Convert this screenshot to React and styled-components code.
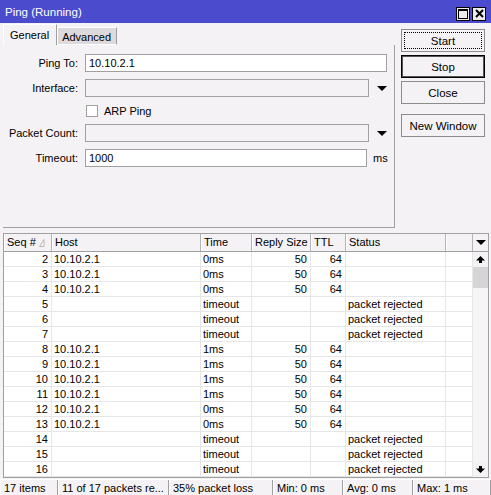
import React from 'react'
import styled, { createGlobalStyle } from 'styled-components'

const GlobalStyle = createGlobalStyle`
  html, body {
    margin: 0;
    padding: 0;
    background: #f4f2f4;
  }
  body {
    font-family: "Liberation Sans", Arial, sans-serif;
    font-size: 11px;
    color: #000;
  }
  * {
    box-sizing: border-box;
  }
`

const Window = styled.div`
  width: 491px;
  height: 495px;
  background: #f4f2f4;
  display: flex;
  flex-direction: column;
  overflow: hidden;
`

const TitleBar = styled.div`
  height: 23px;
  flex: none;
  background: #4b4bcd;
  color: #fff;
  display: flex;
  align-items: center;
  padding: 0 5px 0 5px;
  font-size: 11.5px;
`

const TitleText = styled.div`
  flex: 1;
  padding-top: 1px;
`

const TitleButton = styled.div`
  width: 14px;
  height: 14px;
  margin-left: 2px;
  margin-top: 4px;
  border: 1px solid #000;
  background: #ececec;
  display: flex;
  align-items: center;
  justify-content: center;
`

const Top = styled.div`
  flex: none;
  height: 205px;
  display: flex;
  padding: 1px 0 0 3px;
`

const TabArea = styled.div`
  width: 392px;
  display: flex;
  flex-direction: column;
`

const Tabs = styled.div`
  height: 21px;
  display: flex;
  align-items: flex-end;
`

const Tab = styled.div`
  height: ${p => (p.$active ? '21px' : '18px')};
  padding: ${p => (p.$active ? '3px 7px 0 6px' : '2px 5px 0 4px')};
  background: ${p => (p.$active ? '#f4f2f4' : '#dcdadc')};
  border-top: 1px solid #fff;
  border-left: 1px solid #fff;
  border-right: 1px solid #a0a0a0;
  border-bottom: ${p => (p.$active ? 'none' : '1px solid #fff')};
  line-height: 14px;
`

const Panel = styled.div`
  flex: 1;
  border-right: 1px solid #a0a0a0;
  border-bottom: 1px solid #a0a0a0;
  padding-top: 9px;
  display: grid;
  grid-template-columns: 75px 1fr;
  grid-auto-rows: min-content;
  column-gap: 7px;
  row-gap: 7px;
  align-items: center;
`

const Label = styled.div`
  text-align: right;
`

const Field = styled.div`
  display: flex;
  align-items: center;
  height: ${p => p.$h || 18}px;
`

const Input = styled.div`
  width: ${p => p.$w}px;
  height: 18px;
  background: ${p => (p.$empty ? '#f4f2f4' : '#fff')};
  border: 1px solid #a0a0a0;
  padding: 1px 3px 0;
  line-height: 15px;
`

const Arrow = styled.div`
  margin-left: 8px;
  width: 0;
  height: 0;
  border-left: 5px solid transparent;
  border-right: 5px solid transparent;
  border-top: 5px solid #000;
`

const Unit = styled.span`
  margin-left: 6px;
`

const Check = styled.div`
  width: 12px;
  height: 12px;
  background: #fff;
  border: 1px solid #a0a0a0;
  margin: 0 6px 0 1px;
`

const ButtonCol = styled.div`
  margin-left: 6px;
  padding-top: 5px;
  display: flex;
  flex-direction: column;
  gap: 3px;
`

const Button = styled.div`
  width: 84px;
  height: 23px;
  margin-top: ${p => p.$gap || 0}px;
  background: #f4f2f4;
  border: 1px solid ${p => (p.$default ? '#000' : '#8c8c8c')};
  box-shadow: ${p => (p.$default ? 'inset 0 0 0 1px #555' : 'none')};
  display: flex;
  align-items: center;
  justify-content: center;
  padding: 2px;
  font-size: 11.5px;
`

const Focus = styled.div`
  width: 100%;
  height: 100%;
  border: 1px dotted #000;
  display: flex;
  align-items: center;
  justify-content: center;
`

const TableBox = styled.div`
  flex: none;
  margin: 5px 2px 0 3px;
  height: 245px;
  border: 1px solid #a0a0a0;
  display: flex;
  background: #fff;
`

const Columns = styled.div`
  width: 469px;
  display: flex;
  flex-direction: column;
`

const COLS = '48px 149px 51px 59px 35px 100px 27px'

const HeadRow = styled.div`
  display: grid;
  grid-template-columns: ${COLS};
  height: 18px;
  background: #f4f2f4;
  border-bottom: 1px solid #a0a0a0;
`

const HeadCell = styled.div`
  border-right: 1px solid #b4b4b4;
  border-left: 1px solid #fff;
  padding: 2px 0 0 2px;
  display: flex;
  align-items: flex-start;
  gap: 3px;
`

const Row = styled.div`
  display: grid;
  grid-template-columns: ${COLS};
  height: 15px;
`

const Cell = styled.div`
  border-right: 1px solid #e6e6e6;
  border-bottom: 1px solid #e6e6e6;
  text-align: ${p => (p.$right ? 'right' : 'left')};
  padding: ${p => (p.$right ? '0 3px 0 0' : '0 0 0 2px')};
  line-height: 14px;
  white-space: nowrap;
  overflow: hidden;
`

const Scroll = styled.div`
  width: 15px;
  display: flex;
  flex-direction: column;
  background: #f4f2f4;
`

const ScrollHead = styled.div`
  height: 18px;
  border-bottom: 1px solid #a0a0a0;
  display: flex;
  align-items: center;
  justify-content: center;
`

const ScrollBtn = styled.div`
  height: 15px;
  display: flex;
  align-items: center;
  justify-content: center;
  background: #f4f2f4;
`

const Thumb = styled.div`
  height: 21px;
  background: #d6d4d6;
`

const Track = styled.div`
  flex: 1;
  background: #f6f4f6;
`

const StatusBar = styled.div`
  flex: 1;
  display: flex;
  margin-top: 1px;
  border-top: 1px solid #fff;
`

const StatusCell = styled.div`
  width: ${p => p.$w}px;
  flex: ${p => (p.$w ? 'none' : '1')};
  padding: 2px 0 0 3px;
  border-right: 1px solid #a0a0a0;
  border-left: 1px solid #fff;
  white-space: nowrap;
  overflow: hidden;
`

const SortMark = () => (
  <svg width="6" height="8" viewBox="0 0 6 8" style={{ marginTop: 3 }}>
    <path d="M5 0.5 L5 7.5 L0.5 7.5 Z" fill="none" stroke="#b8b8b8" strokeWidth="1" />
  </svg>
)

const UpArrow = () => (
  <svg width="9" height="7" viewBox="0 0 9 7">
    <path d="M4.5 0 L9 4.5 L6 4.5 L6 7 L3 7 L3 4.5 L0 4.5 Z" fill="#000" />
  </svg>
)

const DownArrow = () => (
  <svg width="9" height="7" viewBox="0 0 9 7">
    <path d="M4.5 7 L9 2.5 L6 2.5 L6 0 L3 0 L3 2.5 L0 2.5 Z" fill="#000" />
  </svg>
)

const ok = (seq, time) => ({ seq, host: '10.10.2.1', time, size: '50', ttl: '64', status: '' })
const lost = seq => ({ seq, host: '', time: 'timeout', size: '', ttl: '', status: 'packet rejected' })

const rows = [
  ok(2, '0ms'),
  ok(3, '0ms'),
  ok(4, '0ms'),
  lost(5),
  lost(6),
  lost(7),
  ok(8, '1ms'),
  ok(9, '1ms'),
  ok(10, '1ms'),
  ok(11, '1ms'),
  ok(12, '0ms'),
  ok(13, '0ms'),
  lost(14),
  lost(15),
  lost(16),
]

export default function App() {
  return (
    <Window>
      <GlobalStyle />
      <TitleBar>
        <TitleText>Ping (Running)</TitleText>
        <TitleButton>
          <svg width="10" height="10" viewBox="0 0 10 10">
            <rect x="0.5" y="0.5" width="9" height="9" fill="none" stroke="#000" />
            <rect x="0" y="0" width="10" height="2" fill="#000" />
          </svg>
        </TitleButton>
        <TitleButton>
          <svg width="9" height="9" viewBox="0 0 9 9">
            <path d="M1 1 L8 8 M8 1 L1 8" stroke="#000" strokeWidth="2" />
          </svg>
        </TitleButton>
      </TitleBar>

      <Top>
        <TabArea>
          <Tabs>
            <Tab $active>General</Tab>
            <Tab>Advanced</Tab>
          </Tabs>
          <Panel>
            <Label>Ping To:</Label>
            <Field>
              <Input $w={302}>10.10.2.1</Input>
            </Field>
            <Label>Interface:</Label>
            <Field>
              <Input $w={284} $empty />
              <Arrow />
            </Field>
            <span />
            <Field $h={13}>
              <Check />
              ARP Ping
            </Field>
            <Label>Packet Count:</Label>
            <Field>
              <Input $w={284} $empty />
              <Arrow />
            </Field>
            <Label>Timeout:</Label>
            <Field>
              <Input $w={282}>1000</Input>
              <Unit>ms</Unit>
            </Field>
          </Panel>
        </TabArea>
        <ButtonCol>
          <Button>
            <Focus>Start</Focus>
          </Button>
          <Button $default>Stop</Button>
          <Button>Close</Button>
          <Button $gap={7}>New Window</Button>
        </ButtonCol>
      </Top>

      <TableBox>
        <Columns>
          <HeadRow>
            <HeadCell>
              Seq #
              <SortMark />
            </HeadCell>
            <HeadCell>Host</HeadCell>
            <HeadCell>Time</HeadCell>
            <HeadCell>Reply Size</HeadCell>
            <HeadCell>TTL</HeadCell>
            <HeadCell>Status</HeadCell>
            <HeadCell />
          </HeadRow>
          {rows.map(r => (
            <Row key={r.seq}>
              <Cell $right>{r.seq}</Cell>
              <Cell>{r.host}</Cell>
              <Cell>{r.time}</Cell>
              <Cell $right>{r.size}</Cell>
              <Cell $right>{r.ttl}</Cell>
              <Cell>{r.status}</Cell>
              <Cell />
            </Row>
          ))}
        </Columns>
        <Scroll>
          <ScrollHead>
            <Arrow style={{ marginLeft: 0 }} />
          </ScrollHead>
          <ScrollBtn>
            <UpArrow />
          </ScrollBtn>
          <Thumb />
          <Track />
          <ScrollBtn>
            <DownArrow />
          </ScrollBtn>
        </Scroll>
      </TableBox>

      <StatusBar>
        <StatusCell $w={58}>17 items</StatusCell>
        <StatusCell $w={111}>11 of 17 packets re...</StatusCell>
        <StatusCell $w={104}>35% packet loss</StatusCell>
        <StatusCell $w={70}>Min: 0 ms</StatusCell>
        <StatusCell $w={70}>Avg: 0 ms</StatusCell>
        <StatusCell>Max: 1 ms</StatusCell>
      </StatusBar>
    </Window>
  )
}
